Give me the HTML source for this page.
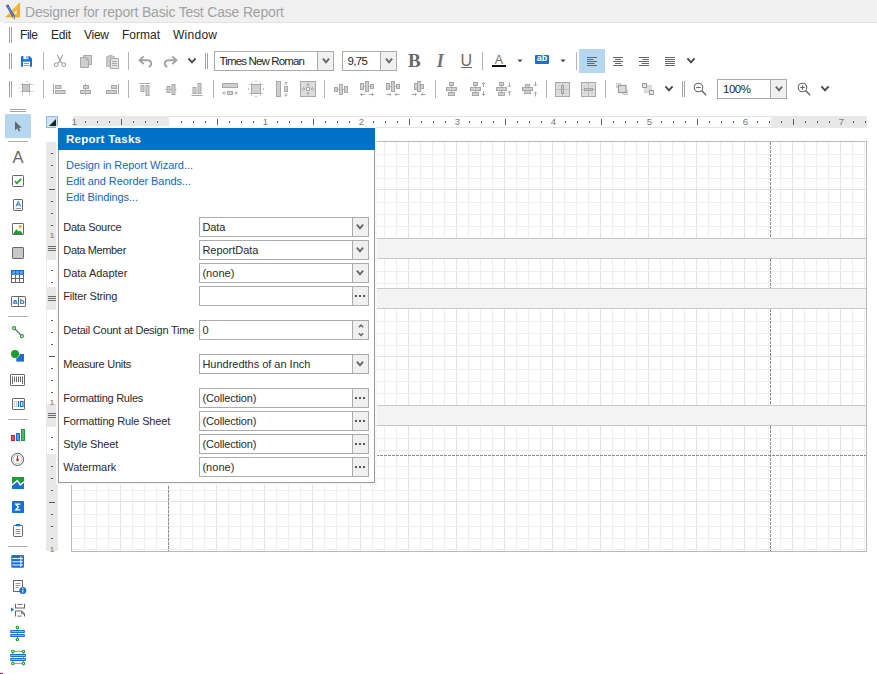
<!DOCTYPE html>
<html><head><meta charset="utf-8"><title>Designer for report Basic Test Case Report</title>
<style>
html,body{margin:0;padding:0;}
body{width:877px;height:674px;overflow:hidden;background:#fff;position:relative;font-family:"Liberation Sans",sans-serif;font-size:11px;color:#2b2b2b;}
.abs{position:absolute;}
.t{position:absolute;white-space:pre;line-height:14px;height:14px;}
.vsep{position:absolute;width:1px;background:#b4b4b4;}
.grip{position:absolute;width:3px;border-left:1px solid #a3a3a3;border-right:1px solid #a3a3a3;box-sizing:border-box;}
.hgrip{position:absolute;height:3px;border-top:1px solid #a3a3a3;border-bottom:1px solid #a3a3a3;box-sizing:border-box;}
.combo{position:absolute;box-sizing:border-box;border:1px solid #ababab;background:#fff;}
.combo .btn{position:absolute;top:-1px;right:-1px;bottom:-1px;width:17px;box-sizing:border-box;border:1px solid #ababab;background:#f0f0f0;}
.ic{position:absolute;overflow:visible;}
.inp{position:absolute;left:199px;width:170px;height:20px;box-sizing:border-box;border:1px solid #ababab;background:#fff;}
.inp .btn{position:absolute;top:-1px;right:-1px;bottom:-1px;width:17px;box-sizing:border-box;border:1px solid #ababab;background:#f0f0f0;}
.lnk{color:#1a66b8;}
</style></head>
<body>
<div class="abs" style="left:0;top:0;width:877px;height:22px;background:#f0f0f0;"></div>
<div class="abs" style="left:3px;top:22px;width:874px;height:1px;background:#e2e2e2;"></div>
<svg class="ic" style="left:5px;top:2px" width="16" height="18" viewBox="0 0 16 18"><path d="M14.6 0.9 V14.9 H0.9 Z M12.1 6.3 V12.3 H7.6 Z" fill="#f9c321" stroke="#e8a010" stroke-width="0.7" fill-rule="evenodd"/><path d="M13.5 3.5 V14" fill="none" stroke="#f08a10" stroke-width="0.8" stroke-dasharray="1 1"/><path d="M2.6 13.9 H13" fill="none" stroke="#f08a10" stroke-width="0.8" stroke-dasharray="1 1"/><g transform="translate(0.4,0.9)"><path d="M1.53 3.89 L3.27 2.91 L9.47 13.91 L7.73 14.89 Z" fill="#2f62d0" stroke="#1b44b0" stroke-width="0.5" /><path d="M2.6 3.8 L8.4 14.1" fill="none" stroke="#dfe9ff" stroke-width="0.7" stroke-dasharray="1.1 1.1"/><path d="M7.73 14.89 L9.47 13.91 L9.5 15.6 Z" fill="#ffe27a" stroke="none" stroke-width="1" /><path d="M8.7 15.3 L9.5 14.9 L9.8 16.8 Z" fill="#111" stroke="none" stroke-width="1" /><path d="M0.89 2.76 L2.63 1.78 L3.27 2.91 L1.53 3.89 Z" fill="#f4f4f4" stroke="#222" stroke-width="0.7" /></g></svg>
<div class="t " style="left:25px;top:5px;font-size:14px;color:#a2a2a2;letter-spacing:-0.186px;">Designer for report Basic Test Case Report</div>
<div class="grip" style="left:9px;top:27px;height:16px;"></div>
<div class="t " style="left:20px;top:28px;font-size:12px;color:#262626;letter-spacing:-0.448px;">File</div>
<div class="t " style="left:51px;top:28px;font-size:12px;color:#262626;letter-spacing:-0.229px;">Edit</div>
<div class="t " style="left:84px;top:28px;font-size:12px;color:#262626;letter-spacing:-0.266px;">View</div>
<div class="t " style="left:122px;top:28px;font-size:12px;color:#262626;letter-spacing:-0.003px;">Format</div>
<div class="t " style="left:173px;top:28px;font-size:12px;color:#262626;letter-spacing:0.263px;">Window</div>
<div class="grip" style="left:9px;top:53px;height:16px;"></div>
<svg class="ic" style="left:18px;top:53px" width="16" height="16" viewBox="0 0 16 16"><path d="M3 4.2 Q3 3 4.2 3 H11.4 L14 5.6 V12.8 Q14 14 12.8 14 H4.2 Q3 14 3 12.8 Z" fill="#1a6fd0" stroke="none" stroke-width="1" /><rect x="5.4" y="3" width="5" height="3.2" fill="#fff" stroke="none" stroke-width="1" /><rect x="8.4" y="3.5" width="1.2" height="2" fill="#1a6fd0" stroke="none" stroke-width="1" /><rect x="5" y="8.6" width="7" height="5.4" fill="#fff" stroke="none" stroke-width="1" /><rect x="6" y="10" width="5" height="0.9" fill="#8e8e8e" stroke="none" stroke-width="1" /><rect x="6" y="12" width="5" height="0.9" fill="#8e8e8e" stroke="none" stroke-width="1" /></svg>
<div class="vsep" style="left:43px;top:52px;height:18px;"></div>
<svg class="ic" style="left:52px;top:53px" width="16" height="16" viewBox="0 0 16 16"><line x1="5.3" y1="2" x2="9.6" y2="10.2" stroke="#9e9e9e" stroke-width="1.1" /><line x1="10.7" y1="2" x2="6.4" y2="10.2" stroke="#9e9e9e" stroke-width="1.1" /><circle cx="4.3" cy="11.6" r="1.9" fill="none" stroke="#9e9e9e" stroke-width="1.1"/><circle cx="11.7" cy="11.6" r="1.9" fill="none" stroke="#9e9e9e" stroke-width="1.1"/></svg>
<svg class="ic" style="left:78px;top:53px" width="16" height="16" viewBox="0 0 16 16"><path d="M5.5 2.5 H13.5 V11.5 H5.5 Z" fill="#cfcfcf" stroke="#a8a8a8" stroke-width="1" /><path d="M2.5 4.5 H8 L10.5 7 V14.5 H2.5 Z" fill="#cfcfcf" stroke="#a8a8a8" stroke-width="1" /><path d="M8 4.5 V7 H10.5" fill="none" stroke="#a8a8a8" stroke-width="1" /></svg>
<svg class="ic" style="left:104px;top:53px" width="16" height="16" viewBox="0 0 16 16"><path d="M2.5 3.5 H10.5 V13.5 H2.5 Z" fill="#c9c9c9" stroke="#bcbcbc" stroke-width="1" /><rect x="4.5" y="1.8" width="4" height="2.2" fill="#bcbcbc" stroke="none" stroke-width="1" /><path d="M6.5 5.5 H14.5 V15.5 H6.5 Z" fill="#e4e4e4" stroke="#a8a8a8" stroke-width="1" /><line x1="8" y1="8.5" x2="13" y2="8.5" stroke="#a8a8a8" stroke-width="1" /><line x1="8" y1="10.5" x2="13" y2="10.5" stroke="#a8a8a8" stroke-width="1" /><line x1="8" y1="12.5" x2="13" y2="12.5" stroke="#a8a8a8" stroke-width="1" /></svg>
<div class="vsep" style="left:128px;top:52px;height:18px;"></div>
<svg class="ic" style="left:137px;top:53px" width="16" height="16" viewBox="0 0 16 16"><path d="M2.6 7.2 H10.2 Q14.2 7.2 14.2 10.8 Q14.2 13.2 11.6 13.9" fill="none" stroke="#a2a2a2" stroke-width="1.9" /><path d="M6.6 3.4 L2.6 7.2 L6.6 11" fill="none" stroke="#a2a2a2" stroke-width="1.9" /></svg>
<svg class="ic" style="left:163px;top:53px" width="16" height="16" viewBox="0 0 16 16"><path d="M13.4 7.2 H5.8 Q1.8 7.2 1.8 10.8 Q1.8 13.2 4.4 13.9" fill="none" stroke="#a2a2a2" stroke-width="1.9" /><path d="M9.4 3.4 L13.4 7.2 L9.4 11" fill="none" stroke="#a2a2a2" stroke-width="1.9" /></svg>
<svg class="ic" style="left:184px;top:53px" width="16" height="16" viewBox="0 0 16 16"><path d="M4.4 5.3 L8 9.3 L11.6 5.3" fill="none" stroke="#4a4a4a" stroke-width="1.9" /></svg>
<div class="grip" style="left:205px;top:53px;height:16px;"></div>
<div class="combo" style="left:214px;top:51px;width:120px;height:20px;"><div class="btn"></div></div>
<svg class="ic" style="left:318px;top:53px" width="16" height="16" viewBox="0 0 16 16"><path d="M4.9 5.7 L8 9.4 L11.1 5.7" fill="none" stroke="#666" stroke-width="1.8" /></svg>
<div class="t " style="left:219.5px;top:54px;font-size:11.5px;color:#262626;letter-spacing:-0.847px;">Times New Roman</div>
<div class="combo" style="left:342px;top:51px;width:55px;height:20px;"><div class="btn"></div></div>
<svg class="ic" style="left:381px;top:53px" width="16" height="16" viewBox="0 0 16 16"><path d="M4.9 5.7 L8 9.4 L11.1 5.7" fill="none" stroke="#666" stroke-width="1.8" /></svg>
<div class="t " style="left:347.5px;top:54px;font-size:11.5px;color:#262626;letter-spacing:-0.630px;">9,75</div>
<div class="t" style="left:408px;top:51.8px;height:18px;line-height:18px;font-family:'Liberation Serif',serif;font-weight:bold;font-size:19px;color:#6a6a6a;">B</div>
<div class="t" style="left:436.8px;top:51.6px;height:18px;line-height:18px;font-family:'Liberation Serif',serif;font-style:italic;font-weight:bold;font-size:18px;color:#747474;">I</div>
<div class="t" style="left:460.5px;top:51.5px;height:18px;line-height:18px;font-family:'Liberation Sans',sans-serif;font-size:16px;color:#6a6a6a;">U</div>
<div class="abs" style="left:461px;top:67px;width:11px;height:1px;background:#6a6a6a;"></div>
<div class="vsep" style="left:482px;top:52px;height:18px;"></div>
<div class="t" style="left:492px;top:52.7px;height:14px;line-height:14px;font-size:12.5px;color:#707070;width:14px;text-align:center;">A</div>
<div class="abs" style="left:492px;top:65px;width:14px;height:2px;background:#111;"></div>
<svg class="ic" style="left:512px;top:53px" width="16" height="16" viewBox="0 0 16 16"><path d="M5.5 6.5 H10.5 L8 9.2 Z" fill="#444" stroke="none" stroke-width="1" /></svg>
<div class="abs" style="left:535px;top:55px;width:14px;height:9px;background:#1a6fd0;border-radius:1px;"></div>
<div class="t" style="left:535px;top:53.5px;width:14px;height:9px;line-height:9px;text-align:center;font-size:9px;font-weight:bold;color:#fff;">ab</div>
<svg class="ic" style="left:555px;top:53px" width="16" height="16" viewBox="0 0 16 16"><path d="M5.5 6.5 H10.5 L8 9.2 Z" fill="#444" stroke="none" stroke-width="1" /></svg>
<div class="vsep" style="left:576px;top:52px;height:18px;"></div>
<div class="abs" style="left:579px;top:49px;width:26px;height:24px;background:#b5d7f0;"></div>
<svg class="ic" style="left:584px;top:53px" width="16" height="16" viewBox="0 0 16 16"><line x1="3" y1="4.5" x2="13" y2="4.5" stroke="#666" stroke-width="1" /><line x1="3" y1="6.5" x2="9.5" y2="6.5" stroke="#666" stroke-width="1" /><line x1="3" y1="8.5" x2="13" y2="8.5" stroke="#666" stroke-width="1" /><line x1="3" y1="10.5" x2="10.5" y2="10.5" stroke="#666" stroke-width="1" /><line x1="3" y1="12.5" x2="13" y2="12.5" stroke="#666" stroke-width="1" /></svg>
<svg class="ic" style="left:610px;top:53px" width="16" height="16" viewBox="0 0 16 16"><line x1="3" y1="4.5" x2="13" y2="4.5" stroke="#666" stroke-width="1" /><line x1="5" y1="6.5" x2="11" y2="6.5" stroke="#666" stroke-width="1" /><line x1="3" y1="8.5" x2="13" y2="8.5" stroke="#666" stroke-width="1" /><line x1="5" y1="10.5" x2="11" y2="10.5" stroke="#666" stroke-width="1" /><line x1="3" y1="12.5" x2="13" y2="12.5" stroke="#666" stroke-width="1" /></svg>
<svg class="ic" style="left:636px;top:53px" width="16" height="16" viewBox="0 0 16 16"><line x1="3" y1="4.5" x2="13" y2="4.5" stroke="#666" stroke-width="1" /><line x1="6.5" y1="6.5" x2="13" y2="6.5" stroke="#666" stroke-width="1" /><line x1="3" y1="8.5" x2="13" y2="8.5" stroke="#666" stroke-width="1" /><line x1="5.5" y1="10.5" x2="13" y2="10.5" stroke="#666" stroke-width="1" /><line x1="3" y1="12.5" x2="13" y2="12.5" stroke="#666" stroke-width="1" /></svg>
<svg class="ic" style="left:662px;top:53px" width="16" height="16" viewBox="0 0 16 16"><line x1="3" y1="4.5" x2="13" y2="4.5" stroke="#666" stroke-width="1" /><line x1="3" y1="6.5" x2="13" y2="6.5" stroke="#666" stroke-width="1" /><line x1="3" y1="8.5" x2="13" y2="8.5" stroke="#666" stroke-width="1" /><line x1="3" y1="10.5" x2="13" y2="10.5" stroke="#666" stroke-width="1" /><line x1="3" y1="12.5" x2="13" y2="12.5" stroke="#666" stroke-width="1" /></svg>
<svg class="ic" style="left:683px;top:53px" width="16" height="16" viewBox="0 0 16 16"><path d="M4.4 5.3 L8 9.3 L11.6 5.3" fill="none" stroke="#4a4a4a" stroke-width="1.9" /></svg>
<div class="grip" style="left:9px;top:81px;height:16px;"></div>
<div class="vsep" style="left:43px;top:80px;height:18px;"></div>
<div class="vsep" style="left:128px;top:80px;height:18px;"></div>
<div class="vsep" style="left:213px;top:80px;height:18px;"></div>
<div class="vsep" style="left:324px;top:80px;height:18px;"></div>
<div class="vsep" style="left:435px;top:80px;height:18px;"></div>
<div class="vsep" style="left:546px;top:80px;height:18px;"></div>
<div class="vsep" style="left:605px;top:80px;height:18px;"></div>
<svg class="ic" style="left:18px;top:81px" width="16" height="16" viewBox="0 0 16 16"><line x1="4.5" y1="1.5" x2="4.5" y2="14.5" stroke="#d0d0d0" stroke-width="1" /><line x1="11.5" y1="1.5" x2="11.5" y2="14.5" stroke="#d0d0d0" stroke-width="1" /><line x1="2" y1="3.5" x2="15.5" y2="3.5" stroke="#d0d0d0" stroke-width="1" /><line x1="2" y1="10.5" x2="15.5" y2="10.5" stroke="#d0d0d0" stroke-width="1" /><rect x="4.5" y="3.5" width="7" height="7" fill="#c6c6c6" stroke="#a6a6a6" stroke-width="1" /><path d="M7.8 0.2 H10.2 L9 1.2 Z" fill="#a8a8a8" stroke="none" stroke-width="1" /><path d="M0.8 5.8 V8.2 L1.8 7 Z" fill="#a8a8a8" stroke="none" stroke-width="1" /></svg>
<svg class="ic" style="left:51px;top:81px" width="16" height="16" viewBox="0 0 16 16"><line x1="2.5" y1="3" x2="2.5" y2="13.5" stroke="#a8a8a8" stroke-width="1" /><rect x="4.5" y="4.5" width="5.5" height="3" fill="#cfcfcf" stroke="#a8a8a8" stroke-width="1" /><rect x="4.5" y="9.5" width="9.5" height="3" fill="#cfcfcf" stroke="#a8a8a8" stroke-width="1" /></svg>
<svg class="ic" style="left:77px;top:81px" width="16" height="16" viewBox="0 0 16 16"><line x1="8.5" y1="2.5" x2="8.5" y2="14" stroke="#a8a8a8" stroke-width="1" /><rect x="6.5" y="4.5" width="5" height="3" fill="#cfcfcf" stroke="#a8a8a8" stroke-width="1" /><rect x="3.5" y="9.5" width="10" height="3" fill="#cfcfcf" stroke="#a8a8a8" stroke-width="1" /></svg>
<svg class="ic" style="left:104px;top:81px" width="16" height="16" viewBox="0 0 16 16"><line x1="14.5" y1="3" x2="14.5" y2="13.5" stroke="#a8a8a8" stroke-width="1" /><rect x="7.5" y="4.5" width="5" height="3" fill="#cfcfcf" stroke="#a8a8a8" stroke-width="1" /><rect x="2.5" y="9.5" width="10" height="3" fill="#cfcfcf" stroke="#a8a8a8" stroke-width="1" /></svg>
<svg class="ic" style="left:137px;top:81px" width="16" height="16" viewBox="0 0 16 16"><line x1="2.5" y1="2.5" x2="13.5" y2="2.5" stroke="#a8a8a8" stroke-width="1" /><rect x="4" y="4.5" width="3" height="6" fill="#cfcfcf" stroke="#a8a8a8" stroke-width="1" /><rect x="9" y="4.5" width="3" height="10" fill="#cfcfcf" stroke="#a8a8a8" stroke-width="1" /></svg>
<svg class="ic" style="left:163px;top:81px" width="16" height="16" viewBox="0 0 16 16"><line x1="2.5" y1="8.5" x2="13.5" y2="8.5" stroke="#a8a8a8" stroke-width="1" /><rect x="4" y="5.5" width="3" height="6" fill="#cfcfcf" stroke="#a8a8a8" stroke-width="1" /><rect x="9" y="3.5" width="3" height="10" fill="#cfcfcf" stroke="#a8a8a8" stroke-width="1" /></svg>
<svg class="ic" style="left:189px;top:81px" width="16" height="16" viewBox="0 0 16 16"><line x1="2.5" y1="14.5" x2="13.5" y2="14.5" stroke="#a8a8a8" stroke-width="1" /><rect x="4" y="6.5" width="3" height="6" fill="#cfcfcf" stroke="#a8a8a8" stroke-width="1" /><rect x="9" y="2.5" width="3" height="10" fill="#cfcfcf" stroke="#a8a8a8" stroke-width="1" /></svg>
<svg class="ic" style="left:222px;top:81px" width="16" height="16" viewBox="0 0 16 16"><rect x="0.5" y="2.5" width="15" height="4" fill="#cfcfcf" stroke="#a8a8a8" stroke-width="1" /><rect x="5.5" y="10.5" width="5" height="3" fill="#cfcfcf" stroke="#a8a8a8" stroke-width="1" /><line x1="4" y1="12" x2="0.8" y2="12" stroke="#a8a8a8" stroke-width="1" /><path d="M2.4000000000000004 10.4 L0.8 12 L2.4000000000000004 13.6" fill="none" stroke="#a8a8a8" stroke-width="1" /><line x1="12" y1="12" x2="15.2" y2="12" stroke="#a8a8a8" stroke-width="1" /><path d="M13.6 10.4 L15.2 12 L13.6 13.6" fill="none" stroke="#a8a8a8" stroke-width="1" /></svg>
<svg class="ic" style="left:248px;top:81px" width="16" height="16" viewBox="0 0 16 16"><line x1="3.5" y1="1" x2="3.5" y2="15" stroke="#c6c6c6" stroke-width="1" /><line x1="12.5" y1="1" x2="12.5" y2="15" stroke="#c6c6c6" stroke-width="1" /><line x1="1" y1="3.5" x2="15" y2="3.5" stroke="#c6c6c6" stroke-width="1" /><line x1="1" y1="12.5" x2="15" y2="12.5" stroke="#c6c6c6" stroke-width="1" /><rect x="3.5" y="3.5" width="9" height="9" fill="#cfcfcf" stroke="#a8a8a8" stroke-width="1" /><path d="M6.8 0 H9.2 L8 1.2 Z" fill="#a8a8a8" stroke="none" stroke-width="1" /><path d="M6.8 16 H9.2 L8 14.8 Z" fill="#a8a8a8" stroke="none" stroke-width="1" /><path d="M0 6.8 V9.2 L1.2 8 Z" fill="#a8a8a8" stroke="none" stroke-width="1" /><path d="M16 6.8 V9.2 L14.8 8 Z" fill="#a8a8a8" stroke="none" stroke-width="1" /></svg>
<svg class="ic" style="left:274px;top:81px" width="16" height="16" viewBox="0 0 16 16"><rect x="2.5" y="0.5" width="4" height="15" fill="#cfcfcf" stroke="#a8a8a8" stroke-width="1" /><rect x="10.5" y="5.5" width="3" height="5" fill="#cfcfcf" stroke="#a8a8a8" stroke-width="1" /><line x1="12" y1="4" x2="12" y2="0.8" stroke="#a8a8a8" stroke-width="1" /><path d="M10.4 2.4000000000000004 L12 0.8 L13.6 2.4000000000000004" fill="none" stroke="#a8a8a8" stroke-width="1" /><line x1="12" y1="12" x2="12" y2="15.2" stroke="#a8a8a8" stroke-width="1" /><path d="M10.4 13.6 L12 15.2 L13.6 13.6" fill="none" stroke="#a8a8a8" stroke-width="1" /></svg>
<svg class="ic" style="left:300px;top:81px" width="16" height="16" viewBox="0 0 16 16"><rect x="0.5" y="0.5" width="15" height="15" fill="#dcdcdc" stroke="#a8a8a8" stroke-width="1" /><rect x="6.5" y="6.5" width="3" height="3" fill="#f4f4f4" stroke="#a8a8a8" stroke-width="1" /><line x1="8" y1="1.5" x2="8" y2="5" stroke="#a8a8a8" stroke-width="1" /><path d="M6.4 3.4 L8 5 L9.6 3.4" fill="none" stroke="#a8a8a8" stroke-width="1" /><line x1="8" y1="14.5" x2="8" y2="11" stroke="#a8a8a8" stroke-width="1" /><path d="M6.4 12.6 L8 11 L9.6 12.6" fill="none" stroke="#a8a8a8" stroke-width="1" /><line x1="1.5" y1="8" x2="5" y2="8" stroke="#a8a8a8" stroke-width="1" /><path d="M3.4 6.4 L5 8 L3.4 9.6" fill="none" stroke="#a8a8a8" stroke-width="1" /><line x1="14.5" y1="8" x2="11" y2="8" stroke="#a8a8a8" stroke-width="1" /><path d="M12.6 6.4 L11 8 L12.6 9.6" fill="none" stroke="#a8a8a8" stroke-width="1" /></svg>
<svg class="ic" style="left:333px;top:81px" width="16" height="16" viewBox="0 0 16 16"><line x1="1" y1="8.5" x2="15" y2="8.5" stroke="#a8a8a8" stroke-width="1" /><rect x="1.5" y="6.5" width="3" height="4" fill="#cfcfcf" stroke="#a8a8a8" stroke-width="1" /><rect x="6.5" y="3.5" width="3" height="10" fill="#cfcfcf" stroke="#a8a8a8" stroke-width="1" /><rect x="11.5" y="5.5" width="3" height="6" fill="#cfcfcf" stroke="#a8a8a8" stroke-width="1" /></svg>
<svg class="ic" style="left:359px;top:81px" width="16" height="16" viewBox="0 0 16 16"><line x1="4.5" y1="5.5" x2="11.5" y2="5.5" stroke="#a8a8a8" stroke-width="1" /><rect x="1.5" y="2.5" width="3" height="6" fill="#cfcfcf" stroke="#a8a8a8" stroke-width="1" /><rect x="6.5" y="0.5" width="3" height="10" fill="#cfcfcf" stroke="#a8a8a8" stroke-width="1" /><rect x="11.5" y="3.5" width="3" height="4" fill="#cfcfcf" stroke="#a8a8a8" stroke-width="1" /><line x1="6" y1="13.5" x2="1.5" y2="13.5" stroke="#a8a8a8" stroke-width="1" /><path d="M3.1 11.9 L1.5 13.5 L3.1 15.1" fill="none" stroke="#a8a8a8" stroke-width="1" /><line x1="10" y1="13.5" x2="14.5" y2="13.5" stroke="#a8a8a8" stroke-width="1" /><path d="M12.9 11.9 L14.5 13.5 L12.9 15.1" fill="none" stroke="#a8a8a8" stroke-width="1" /></svg>
<svg class="ic" style="left:385px;top:81px" width="16" height="16" viewBox="0 0 16 16"><line x1="4.5" y1="5.5" x2="11.5" y2="5.5" stroke="#a8a8a8" stroke-width="1" /><rect x="1.5" y="2.5" width="3" height="6" fill="#cfcfcf" stroke="#a8a8a8" stroke-width="1" /><rect x="6.5" y="0.5" width="3" height="10" fill="#cfcfcf" stroke="#a8a8a8" stroke-width="1" /><rect x="11.5" y="3.5" width="3" height="4" fill="#cfcfcf" stroke="#a8a8a8" stroke-width="1" /><line x1="1.5" y1="13.5" x2="6" y2="13.5" stroke="#a8a8a8" stroke-width="1" /><path d="M4.4 11.9 L6 13.5 L4.4 15.1" fill="none" stroke="#a8a8a8" stroke-width="1" /><line x1="14.5" y1="13.5" x2="10" y2="13.5" stroke="#a8a8a8" stroke-width="1" /><path d="M11.6 11.9 L10 13.5 L11.6 15.1" fill="none" stroke="#a8a8a8" stroke-width="1" /></svg>
<svg class="ic" style="left:411px;top:81px" width="16" height="16" viewBox="0 0 16 16"><rect x="3.5" y="2.5" width="3" height="6" fill="#cfcfcf" stroke="#a8a8a8" stroke-width="1" /><rect x="9.5" y="3.5" width="3" height="4" fill="#cfcfcf" stroke="#a8a8a8" stroke-width="1" /><rect x="6.5" y="0.5" width="3" height="10" fill="#cfcfcf" stroke="#a8a8a8" stroke-width="1" /><line x1="0.8" y1="13.5" x2="5.3" y2="13.5" stroke="#a8a8a8" stroke-width="1" /><path d="M3.6999999999999997 11.9 L5.3 13.5 L3.6999999999999997 15.1" fill="none" stroke="#a8a8a8" stroke-width="1" /><line x1="14.7" y1="13.5" x2="10.2" y2="13.5" stroke="#a8a8a8" stroke-width="1" /><path d="M11.799999999999999 11.9 L10.2 13.5 L11.799999999999999 15.1" fill="none" stroke="#a8a8a8" stroke-width="1" /></svg>
<svg class="ic" style="left:443px;top:81px" width="16" height="16" viewBox="0 0 16 16"><line x1="8.5" y1="2" x2="8.5" y2="14" stroke="#a8a8a8" stroke-width="1" /><rect x="6.5" y="1.5" width="4" height="3" fill="#cfcfcf" stroke="#a8a8a8" stroke-width="1" /><rect x="3.5" y="6.5" width="10" height="3" fill="#cfcfcf" stroke="#a8a8a8" stroke-width="1" /><rect x="5.5" y="11.5" width="6" height="3" fill="#cfcfcf" stroke="#a8a8a8" stroke-width="1" /></svg>
<svg class="ic" style="left:469px;top:81px" width="16" height="16" viewBox="0 0 16 16"><line x1="6.5" y1="2" x2="6.5" y2="14" stroke="#a8a8a8" stroke-width="1" /><rect x="4.5" y="1.5" width="4" height="3" fill="#cfcfcf" stroke="#a8a8a8" stroke-width="1" /><rect x="1.5" y="6.5" width="10" height="3" fill="#cfcfcf" stroke="#a8a8a8" stroke-width="1" /><rect x="3.5" y="11.5" width="6" height="3" fill="#cfcfcf" stroke="#a8a8a8" stroke-width="1" /><line x1="14.5" y1="6" x2="14.5" y2="1.5" stroke="#a8a8a8" stroke-width="1" /><path d="M12.9 3.1 L14.5 1.5 L16.1 3.1" fill="none" stroke="#a8a8a8" stroke-width="1" /><line x1="14.5" y1="10" x2="14.5" y2="14.5" stroke="#a8a8a8" stroke-width="1" /><path d="M12.9 12.9 L14.5 14.5 L16.1 12.9" fill="none" stroke="#a8a8a8" stroke-width="1" /></svg>
<svg class="ic" style="left:495px;top:81px" width="16" height="16" viewBox="0 0 16 16"><line x1="6.5" y1="2" x2="6.5" y2="14" stroke="#a8a8a8" stroke-width="1" /><rect x="4.5" y="1.5" width="4" height="3" fill="#cfcfcf" stroke="#a8a8a8" stroke-width="1" /><rect x="1.5" y="6.5" width="10" height="3" fill="#cfcfcf" stroke="#a8a8a8" stroke-width="1" /><rect x="3.5" y="11.5" width="6" height="3" fill="#cfcfcf" stroke="#a8a8a8" stroke-width="1" /><line x1="14.5" y1="1.5" x2="14.5" y2="6" stroke="#a8a8a8" stroke-width="1" /><path d="M12.9 4.4 L14.5 6 L16.1 4.4" fill="none" stroke="#a8a8a8" stroke-width="1" /><line x1="14.5" y1="14.5" x2="14.5" y2="10" stroke="#a8a8a8" stroke-width="1" /><path d="M12.9 11.6 L14.5 10 L16.1 11.6" fill="none" stroke="#a8a8a8" stroke-width="1" /></svg>
<svg class="ic" style="left:521px;top:81px" width="16" height="16" viewBox="0 0 16 16"><rect x="4.5" y="3.5" width="4" height="3" fill="#cfcfcf" stroke="#a8a8a8" stroke-width="1" /><rect x="3.5" y="9.5" width="6" height="3" fill="#cfcfcf" stroke="#a8a8a8" stroke-width="1" /><rect x="1.5" y="6.5" width="10" height="3" fill="#cfcfcf" stroke="#a8a8a8" stroke-width="1" /><line x1="14.5" y1="0.5" x2="14.5" y2="5" stroke="#a8a8a8" stroke-width="1" /><path d="M12.9 3.4 L14.5 5 L16.1 3.4" fill="none" stroke="#a8a8a8" stroke-width="1" /><line x1="14.5" y1="15.5" x2="14.5" y2="11" stroke="#a8a8a8" stroke-width="1" /><path d="M12.9 12.6 L14.5 11 L16.1 12.6" fill="none" stroke="#a8a8a8" stroke-width="1" /></svg>
<svg class="ic" style="left:555px;top:81px" width="16" height="16" viewBox="0 0 16 16"><rect x="0.5" y="1.5" width="14" height="14" fill="#dedede" stroke="#a8a8a8" stroke-width="1" /><line x1="7.5" y1="1.5" x2="7.5" y2="15.5" stroke="#bcbcbc" stroke-width="1" /><line x1="0.5" y1="8.5" x2="14.5" y2="8.5" stroke="#bcbcbc" stroke-width="1" /><rect x="3.5" y="4.5" width="1" height="1" fill="#b4b4b4" stroke="none" stroke-width="1" /><rect x="10.5" y="4.5" width="1" height="1" fill="#b4b4b4" stroke="none" stroke-width="1" /><rect x="3.5" y="11.5" width="1" height="1" fill="#b4b4b4" stroke="none" stroke-width="1" /><rect x="10.5" y="11.5" width="1" height="1" fill="#b4b4b4" stroke="none" stroke-width="1" /><rect x="6.5" y="4.5" width="2" height="8" fill="#c8c8c8" stroke="#a2a2a2" stroke-width="1" /></svg>
<svg class="ic" style="left:581px;top:81px" width="16" height="16" viewBox="0 0 16 16"><rect x="0.5" y="1.5" width="14" height="14" fill="#dedede" stroke="#a8a8a8" stroke-width="1" /><line x1="7.5" y1="1.5" x2="7.5" y2="15.5" stroke="#bcbcbc" stroke-width="1" /><line x1="0.5" y1="8.5" x2="14.5" y2="8.5" stroke="#bcbcbc" stroke-width="1" /><rect x="3.5" y="4.5" width="1" height="1" fill="#b4b4b4" stroke="none" stroke-width="1" /><rect x="10.5" y="4.5" width="1" height="1" fill="#b4b4b4" stroke="none" stroke-width="1" /><rect x="3.5" y="11.5" width="1" height="1" fill="#b4b4b4" stroke="none" stroke-width="1" /><rect x="10.5" y="11.5" width="1" height="1" fill="#b4b4b4" stroke="none" stroke-width="1" /><rect x="3.5" y="7.5" width="8" height="2" fill="#c8c8c8" stroke="#a2a2a2" stroke-width="1" /></svg>
<svg class="ic" style="left:614px;top:81px" width="16" height="16" viewBox="0 0 16 16"><rect x="2.5" y="2.5" width="4" height="4" fill="#e6e6e6" stroke="#cfcfcf" stroke-width="1" /><rect x="9" y="9.5" width="4.5" height="4" fill="#e6e6e6" stroke="#cfcfcf" stroke-width="1" /><rect x="4.5" y="4.5" width="7.5" height="7" fill="#dcdcdc" stroke="#9a9a9a" stroke-width="1.2" /></svg>
<svg class="ic" style="left:640px;top:81px" width="16" height="16" viewBox="0 0 16 16"><rect x="4.5" y="4.5" width="7" height="7" fill="#dedede" stroke="#d4d4d4" stroke-width="1" /><rect x="2.5" y="2.5" width="4" height="4" fill="#e4e4e4" stroke="#9a9a9a" stroke-width="1" /><rect x="9.5" y="9.5" width="4" height="4" fill="#e4e4e4" stroke="#9a9a9a" stroke-width="1" /></svg>
<svg class="ic" style="left:661px;top:81px" width="16" height="16" viewBox="0 0 16 16"><path d="M4.4 5.3 L8 9.3 L11.6 5.3" fill="none" stroke="#4a4a4a" stroke-width="1.9" /></svg>
<div class="grip" style="left:682px;top:81px;height:16px;"></div>
<svg class="ic" style="left:692px;top:81px" width="16" height="16" viewBox="0 0 16 16"><circle cx="6.5" cy="6.5" r="4.3" fill="none" stroke="#666" stroke-width="1.1"/><line x1="9.8" y1="9.8" x2="14.2" y2="14.2" stroke="#666" stroke-width="1.5" /><line x1="4.2" y1="6.5" x2="8.8" y2="6.5" stroke="#666" stroke-width="1.1" /></svg>
<div class="combo" style="left:717px;top:79px;width:70px;height:20px;"><div class="btn"></div></div>
<svg class="ic" style="left:771px;top:81px" width="16" height="16" viewBox="0 0 16 16"><path d="M4.9 5.7 L8 9.4 L11.1 5.7" fill="none" stroke="#666" stroke-width="1.8" /></svg>
<div class="t " style="left:723px;top:82px;font-size:11.5px;color:#262626;letter-spacing:-0.474px;">100%</div>
<svg class="ic" style="left:796px;top:81px" width="16" height="16" viewBox="0 0 16 16"><circle cx="6.5" cy="6.5" r="4.3" fill="none" stroke="#666" stroke-width="1.1"/><line x1="9.8" y1="9.8" x2="14.2" y2="14.2" stroke="#666" stroke-width="1.5" /><line x1="4.2" y1="6.5" x2="8.8" y2="6.5" stroke="#666" stroke-width="1.1" /><line x1="6.5" y1="4.2" x2="6.5" y2="8.8" stroke="#666" stroke-width="1.1" /></svg>
<svg class="ic" style="left:817px;top:81px" width="16" height="16" viewBox="0 0 16 16"><path d="M4.4 5.3 L8 9.3 L11.6 5.3" fill="none" stroke="#4a4a4a" stroke-width="1.9" /></svg>
<div class="hgrip" style="left:10px;top:109px;width:16px;"></div>
<div class="abs" style="left:5px;top:114px;width:26px;height:24px;background:#b5d7f0;"></div>
<svg class="ic" style="left:10px;top:118px" width="16" height="16" viewBox="0 0 16 16"><path d="M5 3.2 V12.4 L7.3 10.3 L8.9 13.6 L10.3 13 L8.8 9.8 H11.7 Z" fill="#666" stroke="none" stroke-width="1" /></svg>
<div class="abs" style="left:8px;top:141px;width:20px;height:1px;background:#b0b0b0;"></div>
<div class="abs" style="left:8px;top:316px;width:20px;height:1px;background:#b0b0b0;"></div>
<div class="abs" style="left:8px;top:419px;width:20px;height:1px;background:#b0b0b0;"></div>
<div class="abs" style="left:8px;top:546px;width:20px;height:1px;background:#b0b0b0;"></div>
<div class="t" style="left:10px;top:148px;width:16px;height:18px;line-height:18px;text-align:center;font-size:16.5px;color:#666;">A</div>
<svg class="ic" style="left:10px;top:173px" width="16" height="16" viewBox="0 0 16 16"><rect x="2.5" y="2.5" width="11" height="11" fill="#fff" stroke="#676767" stroke-width="1" rx="0.8"/><path d="M4.9 8.1 L7 10.2 L11.2 5.9" fill="none" stroke="#22a32e" stroke-width="1.7" /></svg>
<svg class="ic" style="left:10px;top:197px" width="16" height="16" viewBox="0 0 16 16"><rect x="3.5" y="2.5" width="9" height="11" fill="#fff" stroke="#676767" stroke-width="1" rx="0.6"/><path d="M5.9 9.5 L8.3 4.4 L10.7 9.5 M6.9 7.8 H9.7" fill="none" stroke="#1a6fd0" stroke-width="1" /><line x1="5.5" y1="11.5" x2="11" y2="11.5" stroke="#8c8c8c" stroke-width="0.9" /></svg>
<svg class="ic" style="left:10px;top:221px" width="16" height="16" viewBox="0 0 16 16"><rect x="2.5" y="2.5" width="11" height="11" fill="#fff" stroke="#676767" stroke-width="1" rx="0.6"/><path d="M3 13 L6.3 8.2 L8.6 10.6 L10.2 9.4 L13 13 Z" fill="#1f9a2c" stroke="none" stroke-width="1" /><circle cx="10.3" cy="5.6" r="1.5" fill="#f6a623" stroke="none" stroke-width="1"/></svg>
<svg class="ic" style="left:10px;top:245px" width="16" height="16" viewBox="0 0 16 16"><rect x="2.5" y="2.5" width="11" height="11" fill="#c8c8c8" stroke="#676767" stroke-width="1" rx="0.6"/></svg>
<svg class="ic" style="left:10px;top:268px" width="16" height="16" viewBox="0 0 16 16"><rect x="1.5" y="2.5" width="12" height="12" fill="#fff" stroke="#676767" stroke-width="1" /><rect x="1" y="2" width="13" height="4.8" fill="#1a6fd0" stroke="none" stroke-width="1" /><rect x="2.6" y="3.2" width="2.3" height="2.4" fill="#7fb1ea" stroke="none" stroke-width="1" /><rect x="6.4" y="3.2" width="2.3" height="2.4" fill="#7fb1ea" stroke="none" stroke-width="1" /><rect x="10.2" y="3.2" width="2.3" height="2.4" fill="#7fb1ea" stroke="none" stroke-width="1" /><line x1="5.5" y1="6.8" x2="5.5" y2="14.5" stroke="#676767" stroke-width="1" /><line x1="9.5" y1="6.8" x2="9.5" y2="14.5" stroke="#676767" stroke-width="1" /><line x1="1.5" y1="10.5" x2="13.5" y2="10.5" stroke="#676767" stroke-width="1" /></svg>
<svg class="ic" style="left:10px;top:293px" width="16" height="16" viewBox="0 0 16 16"><rect x="1.5" y="3.5" width="14" height="10" fill="#fff" stroke="#676767" stroke-width="1" rx="0.6"/><line x1="8.5" y1="3.5" x2="8.5" y2="13.5" stroke="#676767" stroke-width="1" /><text x="5" y="11.2" font-family="Liberation Sans, sans-serif" font-size="8" font-weight="bold" fill="#1a6fd0" text-anchor="middle">a</text><text x="12" y="11.2" font-family="Liberation Sans, sans-serif" font-size="8" font-weight="bold" fill="#1a6fd0" text-anchor="middle">b</text></svg>
<svg class="ic" style="left:10px;top:323px" width="16" height="16" viewBox="0 0 16 16"><line x1="5" y1="6" x2="11" y2="12.2" stroke="#666" stroke-width="1.2" /><circle cx="4.1" cy="5.1" r="1.5" fill="#fff" stroke="#1f9a2c" stroke-width="1.2"/><circle cx="11.9" cy="13.1" r="1.5" fill="#fff" stroke="#1f9a2c" stroke-width="1.2"/></svg>
<svg class="ic" style="left:10px;top:347px" width="16" height="16" viewBox="0 0 16 16"><rect x="6.3" y="7" width="7.7" height="7.6" fill="#1a6fd0" stroke="none" stroke-width="1" /><circle cx="5.2" cy="6.8" r="4.6" fill="#fff" stroke="none" stroke-width="1"/><circle cx="5" cy="7" r="4" fill="#1f9a2c" stroke="none" stroke-width="1"/></svg>
<svg class="ic" style="left:9px;top:372px" width="16" height="16" viewBox="0 0 16 16"><rect x="1.5" y="2.5" width="14" height="11" fill="#fff" stroke="#676767" stroke-width="1" rx="0.6"/><line x1="3.5" y1="4.5" x2="3.5" y2="12" stroke="#676767" stroke-width="1" /><line x1="13.5" y1="4.5" x2="13.5" y2="12" stroke="#676767" stroke-width="1" /><line x1="5.5" y1="4.5" x2="5.5" y2="10" stroke="#676767" stroke-width="1" /><line x1="7.5" y1="4.5" x2="7.5" y2="10" stroke="#676767" stroke-width="1" /><line x1="9.5" y1="4.5" x2="9.5" y2="10" stroke="#676767" stroke-width="1" /><line x1="11.5" y1="4.5" x2="11.5" y2="10" stroke="#676767" stroke-width="1" /></svg>
<svg class="ic" style="left:10px;top:396px" width="16" height="16" viewBox="0 0 16 16"><rect x="2.5" y="2.5" width="12" height="11" fill="#fff" stroke="#676767" stroke-width="1" rx="0.6"/><rect x="4.5" y="5.5" width="2" height="5" fill="none" stroke="#cfcfcf" stroke-width="1" /><line x1="8.5" y1="5" x2="8.5" y2="11" stroke="#1a6fd0" stroke-width="1.1" /><rect x="10.5" y="5.5" width="2.5" height="5" fill="none" stroke="#1a6fd0" stroke-width="1.2" /></svg>
<svg class="ic" style="left:10px;top:427px" width="16" height="16" viewBox="0 0 16 16"><rect x="1.5" y="8.5" width="3" height="5" fill="#e8505b" stroke="#c8202c" stroke-width="1" /><rect x="6.5" y="6.5" width="3" height="7" fill="#5a9be6" stroke="#1a6fd0" stroke-width="1" /><rect x="11.5" y="2.5" width="3" height="11" fill="#55b85f" stroke="#1f9a2c" stroke-width="1" /></svg>
<svg class="ic" style="left:9px;top:451px" width="16" height="16" viewBox="0 0 16 16"><circle cx="8.5" cy="8.4" r="6.1" fill="#fff" stroke="#5c5c5c" stroke-width="1"/><circle cx="8.5" cy="8.4" r="4.5" fill="none" stroke="#a8a8a8" stroke-width="0.7"/><line x1="8.5" y1="8.8" x2="8.5" y2="4.6" stroke="#d3202c" stroke-width="1.1" /><circle cx="8.5" cy="8.9" r="1.3" fill="#d3202c" stroke="none" stroke-width="1"/></svg>
<svg class="ic" style="left:10px;top:475px" width="16" height="16" viewBox="0 0 16 16"><rect x="2" y="2" width="12" height="12" fill="#1a6fd0" stroke="none" stroke-width="1" rx="0.6"/><path d="M2.6 2 H13.4 Q14 2 14 2.6 V6.8 L10.3 10 L7.3 5.6 L2 10 V2.6 Q2 2 2.6 2 Z" fill="#1b9b30" stroke="none" stroke-width="1" /><path d="M2 10 L7.3 5.6 L10.3 10 L14 6.8" fill="none" stroke="#fff" stroke-width="1.5" /></svg>
<svg class="ic" style="left:10px;top:499px" width="16" height="16" viewBox="0 0 16 16"><rect x="2" y="2" width="12" height="12" fill="#1a6fd0" stroke="none" stroke-width="1" rx="0.8"/><path d="M10.4 5.2 H5.8 L8.4 8 L5.8 10.8 H10.4" fill="none" stroke="#fff" stroke-width="1.3" /></svg>
<svg class="ic" style="left:10px;top:522px" width="16" height="16" viewBox="0 0 16 16"><rect x="3.5" y="3.5" width="9" height="11" fill="#fff" stroke="#676767" stroke-width="1" rx="0.8"/><rect x="5.5" y="1.9" width="5" height="2.3" fill="#1a6fd0" stroke="none" stroke-width="1" rx="1"/><line x1="5.5" y1="7.5" x2="10.5" y2="7.5" stroke="#8a8a8a" stroke-width="1" /><line x1="5.5" y1="9.5" x2="10.5" y2="9.5" stroke="#8a8a8a" stroke-width="1" /><line x1="5.5" y1="11.5" x2="10.5" y2="11.5" stroke="#8a8a8a" stroke-width="1" /></svg>
<svg class="ic" style="left:9px;top:553px" width="16" height="16" viewBox="0 0 16 16"><rect x="2.3" y="2.1" width="12.7" height="12.7" fill="#1a6fd0" stroke="none" stroke-width="1" rx="1"/><rect x="3.3" y="5.1" width="10.7" height="0.95" fill="#fff" stroke="none" stroke-width="1" /><rect x="3.3" y="8.3" width="10.7" height="0.95" fill="#fff" stroke="none" stroke-width="1" /><rect x="3.3" y="11.5" width="10.7" height="0.95" fill="#fff" stroke="none" stroke-width="1" /><rect x="11.4" y="3.1" width="0.95" height="10.7" fill="#fff" stroke="none" stroke-width="1" /></svg>
<svg class="ic" style="left:10px;top:578px" width="16" height="16" viewBox="0 0 16 16"><rect x="3.5" y="2.5" width="9" height="11" fill="#fff" stroke="#676767" stroke-width="1" /><line x1="5.5" y1="5.5" x2="10.5" y2="5.5" stroke="#9a9a9a" stroke-width="1" /><line x1="5.5" y1="7.5" x2="10.5" y2="7.5" stroke="#9a9a9a" stroke-width="1" /><line x1="5.5" y1="9.5" x2="8.5" y2="9.5" stroke="#9a9a9a" stroke-width="1" /><circle cx="12.8" cy="12.5" r="3.5" fill="#1a6fd0" stroke="none" stroke-width="1"/><rect x="12.25" y="11.7" width="1.1" height="2.9" fill="#fff" stroke="none" stroke-width="1" /><rect x="12.25" y="9.9" width="1.1" height="1.1" fill="#fff" stroke="none" stroke-width="1" /></svg>
<svg class="ic" style="left:10px;top:602px" width="16" height="16" viewBox="0 0 16 16"><path d="M1 5.4 V9.8 L4.2 7.6 Z" fill="#1a6fd0" stroke="none" stroke-width="1" /><path d="M5.5 1.8 V6 H14.5 V1.8" fill="none" stroke="#676767" stroke-width="1.1" /><line x1="7.5" y1="2.4" x2="12.5" y2="2.4" stroke="#676767" stroke-width="1" /><path d="M5.5 14.6 V9 H11.5 L14.5 12 V14.6" fill="none" stroke="#676767" stroke-width="1.1" /><path d="M11.5 9 V12 H14.5" fill="none" stroke="#676767" stroke-width="0.8" /><line x1="7.5" y1="14.1" x2="11.5" y2="14.1" stroke="#676767" stroke-width="1" /></svg>
<svg class="ic" style="left:9px;top:625px" width="16" height="16" viewBox="0 0 16 16"><line x1="8.4" y1="3" x2="8.4" y2="14" stroke="#8a8a8a" stroke-width="1" /><rect x="1.2" y="5.1" width="14.6" height="2.8" fill="#1a6fd0" stroke="none" stroke-width="1" rx="0.4"/><rect x="2.2" y="6.05" width="12.6" height="0.9" fill="#9cc6f2" stroke="none" stroke-width="1" /><rect x="1.2" y="9.1" width="14.6" height="2.8" fill="#1a6fd0" stroke="none" stroke-width="1" rx="0.4"/><rect x="2.2" y="10.049999999999999" width="12.6" height="0.9" fill="#9cc6f2" stroke="none" stroke-width="1" /><circle cx="8.4" cy="2.5" r="1.75" fill="#1f9a2c" stroke="none" stroke-width="1"/><circle cx="8.4" cy="2.5" r="0.65" fill="#fff" stroke="none" stroke-width="1"/><circle cx="8.4" cy="14.4" r="1.75" fill="#1f9a2c" stroke="none" stroke-width="1"/><circle cx="8.4" cy="14.4" r="0.65" fill="#fff" stroke="none" stroke-width="1"/></svg>
<svg class="ic" style="left:10px;top:649px" width="16" height="16" viewBox="0 0 16 16"><rect x="2.8" y="2.4" width="10.7" height="12" fill="none" stroke="#9a9a9a" stroke-width="1" /><rect x="0.2" y="5.1" width="15.7" height="2.8" fill="#1a6fd0" stroke="none" stroke-width="1" rx="0.4"/><rect x="1.2" y="6.05" width="13.7" height="0.9" fill="#9cc6f2" stroke="none" stroke-width="1" /><rect x="0.2" y="9.1" width="15.7" height="2.8" fill="#1a6fd0" stroke="none" stroke-width="1" rx="0.4"/><rect x="1.2" y="10.049999999999999" width="13.7" height="0.9" fill="#9cc6f2" stroke="none" stroke-width="1" /><circle cx="2.8" cy="2.4" r="1.75" fill="#1f9a2c" stroke="none" stroke-width="1"/><circle cx="2.8" cy="2.4" r="0.65" fill="#fff" stroke="none" stroke-width="1"/><circle cx="2.8" cy="14.4" r="1.75" fill="#1f9a2c" stroke="none" stroke-width="1"/><circle cx="2.8" cy="14.4" r="0.65" fill="#fff" stroke="none" stroke-width="1"/><circle cx="13.5" cy="2.4" r="1.75" fill="#1f9a2c" stroke="none" stroke-width="1"/><circle cx="13.5" cy="2.4" r="0.65" fill="#fff" stroke="none" stroke-width="1"/><circle cx="13.5" cy="14.4" r="1.75" fill="#1f9a2c" stroke="none" stroke-width="1"/><circle cx="13.5" cy="14.4" r="0.65" fill="#fff" stroke="none" stroke-width="1"/></svg>
<div class="abs" style="left:0;top:673px;width:1px;height:1px;background:#f00000;"></div><div class="abs" style="left:1px;top:673px;width:1px;height:1px;background:#00c800;"></div><div class="abs" style="left:2px;top:673px;width:1px;height:1px;background:#0000f0;"></div>
<div class="abs" style="left:46px;top:116px;width:12px;height:12px;box-sizing:border-box;background:#cfe3f6;border:1px solid #8dbbe8;"></div>
<svg class="ic" style="left:46px;top:116px" width="12" height="12" viewBox="0 0 12 12"><path d="M10 3 V10 H3 Z" fill="#222"/></svg>
<svg class="abs" style="left:0;top:0" width="877" height="674" viewBox="0 0 877 674" shape-rendering="crispEdges"><rect x="73" y="116" width="794" height="12" fill="#fff"/><rect x="73" y="116" width="96" height="12" fill="#e8e8e8"/><rect x="771" y="116" width="96" height="12" fill="#e8e8e8"/><rect x="169" y="116" width="602" height="1" fill="#e4e4e4"/><rect x="169" y="127" width="602" height="1" fill="#e4e4e4"/><rect x="85" y="121" width="1" height="2" fill="#5a5a5a"/><rect x="97" y="121" width="1" height="2" fill="#5a5a5a"/><rect x="109" y="121" width="1" height="2" fill="#5a5a5a"/><rect x="121" y="119" width="1" height="6" fill="#5a5a5a"/><rect x="133" y="121" width="1" height="2" fill="#5a5a5a"/><rect x="145" y="121" width="1" height="2" fill="#5a5a5a"/><rect x="157" y="121" width="1" height="2" fill="#5a5a5a"/><rect x="181" y="121" width="1" height="2" fill="#5a5a5a"/><rect x="193" y="121" width="1" height="2" fill="#5a5a5a"/><rect x="205" y="121" width="1" height="2" fill="#5a5a5a"/><rect x="217" y="119" width="1" height="6" fill="#5a5a5a"/><rect x="229" y="121" width="1" height="2" fill="#5a5a5a"/><rect x="241" y="121" width="1" height="2" fill="#5a5a5a"/><rect x="253" y="121" width="1" height="2" fill="#5a5a5a"/><rect x="277" y="121" width="1" height="2" fill="#5a5a5a"/><rect x="289" y="121" width="1" height="2" fill="#5a5a5a"/><rect x="301" y="121" width="1" height="2" fill="#5a5a5a"/><rect x="313" y="119" width="1" height="6" fill="#5a5a5a"/><rect x="325" y="121" width="1" height="2" fill="#5a5a5a"/><rect x="337" y="121" width="1" height="2" fill="#5a5a5a"/><rect x="349" y="121" width="1" height="2" fill="#5a5a5a"/><rect x="373" y="121" width="1" height="2" fill="#5a5a5a"/><rect x="385" y="121" width="1" height="2" fill="#5a5a5a"/><rect x="397" y="121" width="1" height="2" fill="#5a5a5a"/><rect x="409" y="119" width="1" height="6" fill="#5a5a5a"/><rect x="421" y="121" width="1" height="2" fill="#5a5a5a"/><rect x="433" y="121" width="1" height="2" fill="#5a5a5a"/><rect x="445" y="121" width="1" height="2" fill="#5a5a5a"/><rect x="469" y="121" width="1" height="2" fill="#5a5a5a"/><rect x="481" y="121" width="1" height="2" fill="#5a5a5a"/><rect x="493" y="121" width="1" height="2" fill="#5a5a5a"/><rect x="505" y="119" width="1" height="6" fill="#5a5a5a"/><rect x="517" y="121" width="1" height="2" fill="#5a5a5a"/><rect x="529" y="121" width="1" height="2" fill="#5a5a5a"/><rect x="541" y="121" width="1" height="2" fill="#5a5a5a"/><rect x="565" y="121" width="1" height="2" fill="#5a5a5a"/><rect x="577" y="121" width="1" height="2" fill="#5a5a5a"/><rect x="589" y="121" width="1" height="2" fill="#5a5a5a"/><rect x="601" y="119" width="1" height="6" fill="#5a5a5a"/><rect x="613" y="121" width="1" height="2" fill="#5a5a5a"/><rect x="625" y="121" width="1" height="2" fill="#5a5a5a"/><rect x="637" y="121" width="1" height="2" fill="#5a5a5a"/><rect x="661" y="121" width="1" height="2" fill="#5a5a5a"/><rect x="673" y="121" width="1" height="2" fill="#5a5a5a"/><rect x="685" y="121" width="1" height="2" fill="#5a5a5a"/><rect x="697" y="119" width="1" height="6" fill="#5a5a5a"/><rect x="709" y="121" width="1" height="2" fill="#5a5a5a"/><rect x="721" y="121" width="1" height="2" fill="#5a5a5a"/><rect x="733" y="121" width="1" height="2" fill="#5a5a5a"/><rect x="757" y="121" width="1" height="2" fill="#5a5a5a"/><rect x="769" y="121" width="1" height="2" fill="#5a5a5a"/><rect x="781" y="121" width="1" height="2" fill="#5a5a5a"/><rect x="793" y="119" width="1" height="6" fill="#5a5a5a"/><rect x="805" y="121" width="1" height="2" fill="#5a5a5a"/><rect x="817" y="121" width="1" height="2" fill="#5a5a5a"/><rect x="829" y="121" width="1" height="2" fill="#5a5a5a"/><rect x="853" y="121" width="1" height="2" fill="#5a5a5a"/><rect x="865" y="121" width="1" height="2" fill="#5a5a5a"/><rect x="46" y="142" width="12" height="409" fill="#fff"/><rect x="46" y="142" width="12" height="118" fill="#e8e8e8"/><rect x="46" y="287" width="12" height="23" fill="#e8e8e8"/><rect x="46" y="404" width="12" height="23" fill="#e8e8e8"/><rect x="46" y="454" width="12" height="97" fill="#e8e8e8"/><rect x="46" y="260" width="1" height="27" fill="#ededed"/><rect x="57" y="260" width="1" height="27" fill="#ededed"/><rect x="46" y="310" width="1" height="94" fill="#ededed"/><rect x="57" y="310" width="1" height="94" fill="#ededed"/><rect x="46" y="427" width="1" height="27" fill="#ededed"/><rect x="57" y="427" width="1" height="27" fill="#ededed"/><rect x="51" y="153" width="2" height="1" fill="#5a5a5a"/><rect x="51" y="165" width="2" height="1" fill="#5a5a5a"/><rect x="51" y="177" width="2" height="1" fill="#5a5a5a"/><rect x="49" y="189" width="6" height="1" fill="#5a5a5a"/><rect x="51" y="201" width="2" height="1" fill="#5a5a5a"/><rect x="51" y="213" width="2" height="1" fill="#5a5a5a"/><rect x="51" y="225" width="2" height="1" fill="#5a5a5a"/><rect x="51" y="270" width="2" height="1" fill="#5a5a5a"/><rect x="51" y="282" width="2" height="1" fill="#5a5a5a"/><rect x="51" y="320" width="2" height="1" fill="#5a5a5a"/><rect x="51" y="332" width="2" height="1" fill="#5a5a5a"/><rect x="51" y="344" width="2" height="1" fill="#5a5a5a"/><rect x="49" y="356" width="6" height="1" fill="#5a5a5a"/><rect x="51" y="368" width="2" height="1" fill="#5a5a5a"/><rect x="51" y="380" width="2" height="1" fill="#5a5a5a"/><rect x="51" y="392" width="2" height="1" fill="#5a5a5a"/><rect x="51" y="437" width="2" height="1" fill="#5a5a5a"/><rect x="51" y="449" width="2" height="1" fill="#5a5a5a"/><rect x="51" y="466" width="2" height="1" fill="#5a5a5a"/><rect x="51" y="478" width="2" height="1" fill="#5a5a5a"/><rect x="51" y="490" width="2" height="1" fill="#5a5a5a"/><rect x="49" y="502" width="6" height="1" fill="#5a5a5a"/><rect x="51" y="514" width="2" height="1" fill="#5a5a5a"/><rect x="51" y="526" width="2" height="1" fill="#5a5a5a"/><rect x="51" y="538" width="2" height="1" fill="#5a5a5a"/><rect x="48" y="246" width="8" height="1" fill="#6a6a6a"/><rect x="48" y="248" width="8" height="1" fill="#6a6a6a"/><rect x="48" y="250" width="8" height="1" fill="#6a6a6a"/><rect x="48" y="296" width="8" height="1" fill="#6a6a6a"/><rect x="48" y="298" width="8" height="1" fill="#6a6a6a"/><rect x="48" y="300" width="8" height="1" fill="#6a6a6a"/><rect x="48" y="413" width="8" height="1" fill="#6a6a6a"/><rect x="48" y="415" width="8" height="1" fill="#6a6a6a"/><rect x="48" y="417" width="8" height="1" fill="#6a6a6a"/><rect x="71" y="142" width="796" height="96" fill="#fff"/><rect x="84" y="142" width="1" height="96" fill="#efefef"/><rect x="96" y="142" width="1" height="96" fill="#efefef"/><rect x="108" y="142" width="1" height="96" fill="#efefef"/><rect x="120" y="142" width="1" height="96" fill="#e2e2e2"/><rect x="132" y="142" width="1" height="96" fill="#efefef"/><rect x="144" y="142" width="1" height="96" fill="#efefef"/><rect x="156" y="142" width="1" height="96" fill="#efefef"/><rect x="168" y="142" width="1" height="96" fill="#e2e2e2"/><rect x="180" y="142" width="1" height="96" fill="#efefef"/><rect x="192" y="142" width="1" height="96" fill="#efefef"/><rect x="204" y="142" width="1" height="96" fill="#efefef"/><rect x="216" y="142" width="1" height="96" fill="#e2e2e2"/><rect x="228" y="142" width="1" height="96" fill="#efefef"/><rect x="240" y="142" width="1" height="96" fill="#efefef"/><rect x="252" y="142" width="1" height="96" fill="#efefef"/><rect x="264" y="142" width="1" height="96" fill="#e2e2e2"/><rect x="276" y="142" width="1" height="96" fill="#efefef"/><rect x="288" y="142" width="1" height="96" fill="#efefef"/><rect x="300" y="142" width="1" height="96" fill="#efefef"/><rect x="312" y="142" width="1" height="96" fill="#e2e2e2"/><rect x="324" y="142" width="1" height="96" fill="#efefef"/><rect x="336" y="142" width="1" height="96" fill="#efefef"/><rect x="348" y="142" width="1" height="96" fill="#efefef"/><rect x="360" y="142" width="1" height="96" fill="#e2e2e2"/><rect x="372" y="142" width="1" height="96" fill="#efefef"/><rect x="384" y="142" width="1" height="96" fill="#efefef"/><rect x="396" y="142" width="1" height="96" fill="#efefef"/><rect x="408" y="142" width="1" height="96" fill="#e2e2e2"/><rect x="420" y="142" width="1" height="96" fill="#efefef"/><rect x="432" y="142" width="1" height="96" fill="#efefef"/><rect x="444" y="142" width="1" height="96" fill="#efefef"/><rect x="456" y="142" width="1" height="96" fill="#e2e2e2"/><rect x="468" y="142" width="1" height="96" fill="#efefef"/><rect x="480" y="142" width="1" height="96" fill="#efefef"/><rect x="492" y="142" width="1" height="96" fill="#efefef"/><rect x="504" y="142" width="1" height="96" fill="#e2e2e2"/><rect x="516" y="142" width="1" height="96" fill="#efefef"/><rect x="528" y="142" width="1" height="96" fill="#efefef"/><rect x="540" y="142" width="1" height="96" fill="#efefef"/><rect x="552" y="142" width="1" height="96" fill="#e2e2e2"/><rect x="564" y="142" width="1" height="96" fill="#efefef"/><rect x="576" y="142" width="1" height="96" fill="#efefef"/><rect x="588" y="142" width="1" height="96" fill="#efefef"/><rect x="600" y="142" width="1" height="96" fill="#e2e2e2"/><rect x="612" y="142" width="1" height="96" fill="#efefef"/><rect x="624" y="142" width="1" height="96" fill="#efefef"/><rect x="636" y="142" width="1" height="96" fill="#efefef"/><rect x="648" y="142" width="1" height="96" fill="#e2e2e2"/><rect x="660" y="142" width="1" height="96" fill="#efefef"/><rect x="672" y="142" width="1" height="96" fill="#efefef"/><rect x="684" y="142" width="1" height="96" fill="#efefef"/><rect x="696" y="142" width="1" height="96" fill="#e2e2e2"/><rect x="708" y="142" width="1" height="96" fill="#efefef"/><rect x="720" y="142" width="1" height="96" fill="#efefef"/><rect x="732" y="142" width="1" height="96" fill="#efefef"/><rect x="744" y="142" width="1" height="96" fill="#e2e2e2"/><rect x="756" y="142" width="1" height="96" fill="#efefef"/><rect x="768" y="142" width="1" height="96" fill="#efefef"/><rect x="780" y="142" width="1" height="96" fill="#efefef"/><rect x="792" y="142" width="1" height="96" fill="#e2e2e2"/><rect x="804" y="142" width="1" height="96" fill="#efefef"/><rect x="816" y="142" width="1" height="96" fill="#efefef"/><rect x="828" y="142" width="1" height="96" fill="#efefef"/><rect x="840" y="142" width="1" height="96" fill="#e2e2e2"/><rect x="852" y="142" width="1" height="96" fill="#efefef"/><rect x="864" y="142" width="1" height="96" fill="#efefef"/><rect x="71" y="154" width="796" height="1" fill="#efefef"/><rect x="71" y="166" width="796" height="1" fill="#efefef"/><rect x="71" y="178" width="796" height="1" fill="#efefef"/><rect x="71" y="189" width="796" height="1" fill="#e2e2e2"/><rect x="71" y="202" width="796" height="1" fill="#efefef"/><rect x="71" y="214" width="796" height="1" fill="#efefef"/><rect x="71" y="226" width="796" height="1" fill="#efefef"/><rect x="71" y="238" width="796" height="21" fill="#f3f3f3"/><rect x="71" y="238" width="796" height="1" fill="#c9c9c9"/><rect x="71" y="258" width="796" height="1" fill="#c9c9c9"/><rect x="71" y="259" width="796" height="29" fill="#fff"/><rect x="84" y="259" width="1" height="29" fill="#efefef"/><rect x="96" y="259" width="1" height="29" fill="#efefef"/><rect x="108" y="259" width="1" height="29" fill="#efefef"/><rect x="120" y="259" width="1" height="29" fill="#e2e2e2"/><rect x="132" y="259" width="1" height="29" fill="#efefef"/><rect x="144" y="259" width="1" height="29" fill="#efefef"/><rect x="156" y="259" width="1" height="29" fill="#efefef"/><rect x="168" y="259" width="1" height="29" fill="#e2e2e2"/><rect x="180" y="259" width="1" height="29" fill="#efefef"/><rect x="192" y="259" width="1" height="29" fill="#efefef"/><rect x="204" y="259" width="1" height="29" fill="#efefef"/><rect x="216" y="259" width="1" height="29" fill="#e2e2e2"/><rect x="228" y="259" width="1" height="29" fill="#efefef"/><rect x="240" y="259" width="1" height="29" fill="#efefef"/><rect x="252" y="259" width="1" height="29" fill="#efefef"/><rect x="264" y="259" width="1" height="29" fill="#e2e2e2"/><rect x="276" y="259" width="1" height="29" fill="#efefef"/><rect x="288" y="259" width="1" height="29" fill="#efefef"/><rect x="300" y="259" width="1" height="29" fill="#efefef"/><rect x="312" y="259" width="1" height="29" fill="#e2e2e2"/><rect x="324" y="259" width="1" height="29" fill="#efefef"/><rect x="336" y="259" width="1" height="29" fill="#efefef"/><rect x="348" y="259" width="1" height="29" fill="#efefef"/><rect x="360" y="259" width="1" height="29" fill="#e2e2e2"/><rect x="372" y="259" width="1" height="29" fill="#efefef"/><rect x="384" y="259" width="1" height="29" fill="#efefef"/><rect x="396" y="259" width="1" height="29" fill="#efefef"/><rect x="408" y="259" width="1" height="29" fill="#e2e2e2"/><rect x="420" y="259" width="1" height="29" fill="#efefef"/><rect x="432" y="259" width="1" height="29" fill="#efefef"/><rect x="444" y="259" width="1" height="29" fill="#efefef"/><rect x="456" y="259" width="1" height="29" fill="#e2e2e2"/><rect x="468" y="259" width="1" height="29" fill="#efefef"/><rect x="480" y="259" width="1" height="29" fill="#efefef"/><rect x="492" y="259" width="1" height="29" fill="#efefef"/><rect x="504" y="259" width="1" height="29" fill="#e2e2e2"/><rect x="516" y="259" width="1" height="29" fill="#efefef"/><rect x="528" y="259" width="1" height="29" fill="#efefef"/><rect x="540" y="259" width="1" height="29" fill="#efefef"/><rect x="552" y="259" width="1" height="29" fill="#e2e2e2"/><rect x="564" y="259" width="1" height="29" fill="#efefef"/><rect x="576" y="259" width="1" height="29" fill="#efefef"/><rect x="588" y="259" width="1" height="29" fill="#efefef"/><rect x="600" y="259" width="1" height="29" fill="#e2e2e2"/><rect x="612" y="259" width="1" height="29" fill="#efefef"/><rect x="624" y="259" width="1" height="29" fill="#efefef"/><rect x="636" y="259" width="1" height="29" fill="#efefef"/><rect x="648" y="259" width="1" height="29" fill="#e2e2e2"/><rect x="660" y="259" width="1" height="29" fill="#efefef"/><rect x="672" y="259" width="1" height="29" fill="#efefef"/><rect x="684" y="259" width="1" height="29" fill="#efefef"/><rect x="696" y="259" width="1" height="29" fill="#e2e2e2"/><rect x="708" y="259" width="1" height="29" fill="#efefef"/><rect x="720" y="259" width="1" height="29" fill="#efefef"/><rect x="732" y="259" width="1" height="29" fill="#efefef"/><rect x="744" y="259" width="1" height="29" fill="#e2e2e2"/><rect x="756" y="259" width="1" height="29" fill="#efefef"/><rect x="768" y="259" width="1" height="29" fill="#efefef"/><rect x="780" y="259" width="1" height="29" fill="#efefef"/><rect x="792" y="259" width="1" height="29" fill="#e2e2e2"/><rect x="804" y="259" width="1" height="29" fill="#efefef"/><rect x="816" y="259" width="1" height="29" fill="#efefef"/><rect x="828" y="259" width="1" height="29" fill="#efefef"/><rect x="840" y="259" width="1" height="29" fill="#e2e2e2"/><rect x="852" y="259" width="1" height="29" fill="#efefef"/><rect x="864" y="259" width="1" height="29" fill="#efefef"/><rect x="71" y="271" width="796" height="1" fill="#efefef"/><rect x="71" y="283" width="796" height="1" fill="#efefef"/><rect x="71" y="288" width="796" height="21" fill="#f3f3f3"/><rect x="71" y="288" width="796" height="1" fill="#c9c9c9"/><rect x="71" y="308" width="796" height="1" fill="#c9c9c9"/><rect x="71" y="309" width="796" height="96" fill="#fff"/><rect x="84" y="309" width="1" height="96" fill="#efefef"/><rect x="96" y="309" width="1" height="96" fill="#efefef"/><rect x="108" y="309" width="1" height="96" fill="#efefef"/><rect x="120" y="309" width="1" height="96" fill="#e2e2e2"/><rect x="132" y="309" width="1" height="96" fill="#efefef"/><rect x="144" y="309" width="1" height="96" fill="#efefef"/><rect x="156" y="309" width="1" height="96" fill="#efefef"/><rect x="168" y="309" width="1" height="96" fill="#e2e2e2"/><rect x="180" y="309" width="1" height="96" fill="#efefef"/><rect x="192" y="309" width="1" height="96" fill="#efefef"/><rect x="204" y="309" width="1" height="96" fill="#efefef"/><rect x="216" y="309" width="1" height="96" fill="#e2e2e2"/><rect x="228" y="309" width="1" height="96" fill="#efefef"/><rect x="240" y="309" width="1" height="96" fill="#efefef"/><rect x="252" y="309" width="1" height="96" fill="#efefef"/><rect x="264" y="309" width="1" height="96" fill="#e2e2e2"/><rect x="276" y="309" width="1" height="96" fill="#efefef"/><rect x="288" y="309" width="1" height="96" fill="#efefef"/><rect x="300" y="309" width="1" height="96" fill="#efefef"/><rect x="312" y="309" width="1" height="96" fill="#e2e2e2"/><rect x="324" y="309" width="1" height="96" fill="#efefef"/><rect x="336" y="309" width="1" height="96" fill="#efefef"/><rect x="348" y="309" width="1" height="96" fill="#efefef"/><rect x="360" y="309" width="1" height="96" fill="#e2e2e2"/><rect x="372" y="309" width="1" height="96" fill="#efefef"/><rect x="384" y="309" width="1" height="96" fill="#efefef"/><rect x="396" y="309" width="1" height="96" fill="#efefef"/><rect x="408" y="309" width="1" height="96" fill="#e2e2e2"/><rect x="420" y="309" width="1" height="96" fill="#efefef"/><rect x="432" y="309" width="1" height="96" fill="#efefef"/><rect x="444" y="309" width="1" height="96" fill="#efefef"/><rect x="456" y="309" width="1" height="96" fill="#e2e2e2"/><rect x="468" y="309" width="1" height="96" fill="#efefef"/><rect x="480" y="309" width="1" height="96" fill="#efefef"/><rect x="492" y="309" width="1" height="96" fill="#efefef"/><rect x="504" y="309" width="1" height="96" fill="#e2e2e2"/><rect x="516" y="309" width="1" height="96" fill="#efefef"/><rect x="528" y="309" width="1" height="96" fill="#efefef"/><rect x="540" y="309" width="1" height="96" fill="#efefef"/><rect x="552" y="309" width="1" height="96" fill="#e2e2e2"/><rect x="564" y="309" width="1" height="96" fill="#efefef"/><rect x="576" y="309" width="1" height="96" fill="#efefef"/><rect x="588" y="309" width="1" height="96" fill="#efefef"/><rect x="600" y="309" width="1" height="96" fill="#e2e2e2"/><rect x="612" y="309" width="1" height="96" fill="#efefef"/><rect x="624" y="309" width="1" height="96" fill="#efefef"/><rect x="636" y="309" width="1" height="96" fill="#efefef"/><rect x="648" y="309" width="1" height="96" fill="#e2e2e2"/><rect x="660" y="309" width="1" height="96" fill="#efefef"/><rect x="672" y="309" width="1" height="96" fill="#efefef"/><rect x="684" y="309" width="1" height="96" fill="#efefef"/><rect x="696" y="309" width="1" height="96" fill="#e2e2e2"/><rect x="708" y="309" width="1" height="96" fill="#efefef"/><rect x="720" y="309" width="1" height="96" fill="#efefef"/><rect x="732" y="309" width="1" height="96" fill="#efefef"/><rect x="744" y="309" width="1" height="96" fill="#e2e2e2"/><rect x="756" y="309" width="1" height="96" fill="#efefef"/><rect x="768" y="309" width="1" height="96" fill="#efefef"/><rect x="780" y="309" width="1" height="96" fill="#efefef"/><rect x="792" y="309" width="1" height="96" fill="#e2e2e2"/><rect x="804" y="309" width="1" height="96" fill="#efefef"/><rect x="816" y="309" width="1" height="96" fill="#efefef"/><rect x="828" y="309" width="1" height="96" fill="#efefef"/><rect x="840" y="309" width="1" height="96" fill="#e2e2e2"/><rect x="852" y="309" width="1" height="96" fill="#efefef"/><rect x="864" y="309" width="1" height="96" fill="#efefef"/><rect x="71" y="321" width="796" height="1" fill="#efefef"/><rect x="71" y="333" width="796" height="1" fill="#efefef"/><rect x="71" y="345" width="796" height="1" fill="#efefef"/><rect x="71" y="356" width="796" height="1" fill="#e2e2e2"/><rect x="71" y="369" width="796" height="1" fill="#efefef"/><rect x="71" y="381" width="796" height="1" fill="#efefef"/><rect x="71" y="393" width="796" height="1" fill="#efefef"/><rect x="71" y="405" width="796" height="21" fill="#f3f3f3"/><rect x="71" y="405" width="796" height="1" fill="#c9c9c9"/><rect x="71" y="425" width="796" height="1" fill="#c9c9c9"/><rect x="71" y="426" width="796" height="125" fill="#fff"/><rect x="84" y="426" width="1" height="125" fill="#efefef"/><rect x="96" y="426" width="1" height="125" fill="#efefef"/><rect x="108" y="426" width="1" height="125" fill="#efefef"/><rect x="120" y="426" width="1" height="125" fill="#e2e2e2"/><rect x="132" y="426" width="1" height="125" fill="#efefef"/><rect x="144" y="426" width="1" height="125" fill="#efefef"/><rect x="156" y="426" width="1" height="125" fill="#efefef"/><rect x="168" y="426" width="1" height="125" fill="#e2e2e2"/><rect x="180" y="426" width="1" height="125" fill="#efefef"/><rect x="192" y="426" width="1" height="125" fill="#efefef"/><rect x="204" y="426" width="1" height="125" fill="#efefef"/><rect x="216" y="426" width="1" height="125" fill="#e2e2e2"/><rect x="228" y="426" width="1" height="125" fill="#efefef"/><rect x="240" y="426" width="1" height="125" fill="#efefef"/><rect x="252" y="426" width="1" height="125" fill="#efefef"/><rect x="264" y="426" width="1" height="125" fill="#e2e2e2"/><rect x="276" y="426" width="1" height="125" fill="#efefef"/><rect x="288" y="426" width="1" height="125" fill="#efefef"/><rect x="300" y="426" width="1" height="125" fill="#efefef"/><rect x="312" y="426" width="1" height="125" fill="#e2e2e2"/><rect x="324" y="426" width="1" height="125" fill="#efefef"/><rect x="336" y="426" width="1" height="125" fill="#efefef"/><rect x="348" y="426" width="1" height="125" fill="#efefef"/><rect x="360" y="426" width="1" height="125" fill="#e2e2e2"/><rect x="372" y="426" width="1" height="125" fill="#efefef"/><rect x="384" y="426" width="1" height="125" fill="#efefef"/><rect x="396" y="426" width="1" height="125" fill="#efefef"/><rect x="408" y="426" width="1" height="125" fill="#e2e2e2"/><rect x="420" y="426" width="1" height="125" fill="#efefef"/><rect x="432" y="426" width="1" height="125" fill="#efefef"/><rect x="444" y="426" width="1" height="125" fill="#efefef"/><rect x="456" y="426" width="1" height="125" fill="#e2e2e2"/><rect x="468" y="426" width="1" height="125" fill="#efefef"/><rect x="480" y="426" width="1" height="125" fill="#efefef"/><rect x="492" y="426" width="1" height="125" fill="#efefef"/><rect x="504" y="426" width="1" height="125" fill="#e2e2e2"/><rect x="516" y="426" width="1" height="125" fill="#efefef"/><rect x="528" y="426" width="1" height="125" fill="#efefef"/><rect x="540" y="426" width="1" height="125" fill="#efefef"/><rect x="552" y="426" width="1" height="125" fill="#e2e2e2"/><rect x="564" y="426" width="1" height="125" fill="#efefef"/><rect x="576" y="426" width="1" height="125" fill="#efefef"/><rect x="588" y="426" width="1" height="125" fill="#efefef"/><rect x="600" y="426" width="1" height="125" fill="#e2e2e2"/><rect x="612" y="426" width="1" height="125" fill="#efefef"/><rect x="624" y="426" width="1" height="125" fill="#efefef"/><rect x="636" y="426" width="1" height="125" fill="#efefef"/><rect x="648" y="426" width="1" height="125" fill="#e2e2e2"/><rect x="660" y="426" width="1" height="125" fill="#efefef"/><rect x="672" y="426" width="1" height="125" fill="#efefef"/><rect x="684" y="426" width="1" height="125" fill="#efefef"/><rect x="696" y="426" width="1" height="125" fill="#e2e2e2"/><rect x="708" y="426" width="1" height="125" fill="#efefef"/><rect x="720" y="426" width="1" height="125" fill="#efefef"/><rect x="732" y="426" width="1" height="125" fill="#efefef"/><rect x="744" y="426" width="1" height="125" fill="#e2e2e2"/><rect x="756" y="426" width="1" height="125" fill="#efefef"/><rect x="768" y="426" width="1" height="125" fill="#efefef"/><rect x="780" y="426" width="1" height="125" fill="#efefef"/><rect x="792" y="426" width="1" height="125" fill="#e2e2e2"/><rect x="804" y="426" width="1" height="125" fill="#efefef"/><rect x="816" y="426" width="1" height="125" fill="#efefef"/><rect x="828" y="426" width="1" height="125" fill="#efefef"/><rect x="840" y="426" width="1" height="125" fill="#e2e2e2"/><rect x="852" y="426" width="1" height="125" fill="#efefef"/><rect x="864" y="426" width="1" height="125" fill="#efefef"/><rect x="71" y="438" width="796" height="1" fill="#efefef"/><rect x="71" y="450" width="796" height="1" fill="#efefef"/><rect x="71" y="466" width="796" height="1" fill="#efefef"/><rect x="71" y="478" width="796" height="1" fill="#efefef"/><rect x="71" y="490" width="796" height="1" fill="#efefef"/><rect x="71" y="501" width="796" height="1" fill="#e2e2e2"/><rect x="71" y="514" width="796" height="1" fill="#efefef"/><rect x="71" y="526" width="796" height="1" fill="#efefef"/><rect x="71" y="538" width="796" height="1" fill="#efefef"/><rect x="71" y="549" width="796" height="1" fill="#efefef"/><line x1="168.5" y1="142" x2="168.5" y2="238" stroke="#8c8c8c" stroke-width="1" stroke-dasharray="3 1"/><line x1="770.5" y1="142" x2="770.5" y2="238" stroke="#8c8c8c" stroke-width="1" stroke-dasharray="3 1"/><line x1="168.5" y1="259" x2="168.5" y2="288" stroke="#8c8c8c" stroke-width="1" stroke-dasharray="3 1"/><line x1="770.5" y1="259" x2="770.5" y2="288" stroke="#8c8c8c" stroke-width="1" stroke-dasharray="3 1"/><line x1="168.5" y1="309" x2="168.5" y2="405" stroke="#8c8c8c" stroke-width="1" stroke-dasharray="3 1"/><line x1="770.5" y1="309" x2="770.5" y2="405" stroke="#8c8c8c" stroke-width="1" stroke-dasharray="3 1"/><line x1="168.5" y1="426" x2="168.5" y2="551" stroke="#8c8c8c" stroke-width="1" stroke-dasharray="3 1"/><line x1="770.5" y1="426" x2="770.5" y2="551" stroke="#8c8c8c" stroke-width="1" stroke-dasharray="3 1"/><line x1="72" y1="455.5" x2="866" y2="455.5" stroke="#8c8c8c" stroke-width="1" stroke-dasharray="3 1"/><rect x="71" y="141" width="796" height="1" fill="#b9b9b9"/><rect x="71" y="551" width="796" height="1" fill="#b9b9b9"/><rect x="71" y="141" width="1" height="411" fill="#b9b9b9"/><rect x="866" y="141" width="1" height="411" fill="#b9b9b9"/></svg>
<div class="t" style="left:69.3px;top:116px;width:10px;height:12px;line-height:12px;text-align:center;font-size:9.5px;color:#777;">1</div>
<div class="t" style="left:260.5px;top:116px;width:10px;height:12px;line-height:12px;text-align:center;font-size:9.5px;color:#777;">1</div>
<div class="t" style="left:356.5px;top:116px;width:10px;height:12px;line-height:12px;text-align:center;font-size:9.5px;color:#777;">2</div>
<div class="t" style="left:452.5px;top:116px;width:10px;height:12px;line-height:12px;text-align:center;font-size:9.5px;color:#777;">3</div>
<div class="t" style="left:548.5px;top:116px;width:10px;height:12px;line-height:12px;text-align:center;font-size:9.5px;color:#777;">4</div>
<div class="t" style="left:644.5px;top:116px;width:10px;height:12px;line-height:12px;text-align:center;font-size:9.5px;color:#777;">5</div>
<div class="t" style="left:740.5px;top:116px;width:10px;height:12px;line-height:12px;text-align:center;font-size:9.5px;color:#777;">6</div>
<div class="t" style="left:836.5px;top:116px;width:10px;height:12px;line-height:12px;text-align:center;font-size:9.5px;color:#777;">7</div>
<div class="t" style="left:47px;top:231px;width:10px;height:10px;line-height:10px;text-align:center;font-size:8px;font-weight:bold;color:#9a8f86;">1</div>
<div class="t" style="left:47px;top:398px;width:10px;height:10px;line-height:10px;text-align:center;font-size:8px;font-weight:bold;color:#9a8f86;">1</div>
<div class="t" style="left:47px;top:544.5px;width:10px;height:10px;line-height:10px;text-align:center;font-size:8px;font-weight:bold;color:#9a8f86;">1</div>
<div class="abs" style="left:56px;top:126px;width:321px;height:359px;background:#faf7f6;"></div>
<div class="abs" style="left:58px;top:128px;width:317px;height:355px;box-sizing:border-box;background:#fff;border:1px solid #9a9a9a;"></div>
<div class="abs" style="left:58px;top:128px;width:317px;height:22px;background:#0072c6;"></div>
<div class="t " style="left:66px;top:132px;font-size:11.5px;color:#fff;font-weight:bold;letter-spacing:0.271px;">Report Tasks</div>
<div class="t " style="left:66px;top:158px;font-size:11px;color:#1067c6;letter-spacing:-0.056px;">Design in Report Wizard...</div>
<div class="t " style="left:66px;top:174px;font-size:11px;color:#1067c6;letter-spacing:-0.066px;">Edit and Reorder Bands...</div>
<div class="t " style="left:66px;top:190px;font-size:11px;color:#1067c6;letter-spacing:-0.092px;">Edit Bindings...</div>
<div class="t " style="left:63.3px;top:220px;font-size:11px;color:#2b2b2b;letter-spacing:-0.276px;">Data Source</div>
<div class="inp" style="top:217px;"><div class="btn"></div></div>
<div class="t " style="left:202.4px;top:220px;font-size:11px;color:#2b2b2b;letter-spacing:-0.083px;">Data</div>
<svg class="ic" style="left:352px;top:219px" width="16" height="16" viewBox="0 0 16 16"><path d="M4.9 5.7 L8 9.4 L11.1 5.7" fill="none" stroke="#666" stroke-width="1.8" /></svg>
<div class="t " style="left:63.3px;top:243px;font-size:11px;color:#2b2b2b;letter-spacing:-0.364px;">Data Member</div>
<div class="inp" style="top:240px;"><div class="btn"></div></div>
<div class="t " style="left:202.4px;top:243px;font-size:11px;color:#2b2b2b;letter-spacing:-0.030px;">ReportData</div>
<svg class="ic" style="left:352px;top:242px" width="16" height="16" viewBox="0 0 16 16"><path d="M4.9 5.7 L8 9.4 L11.1 5.7" fill="none" stroke="#666" stroke-width="1.8" /></svg>
<div class="t " style="left:63.3px;top:266px;font-size:11px;color:#2b2b2b;letter-spacing:-0.020px;">Data Adapter</div>
<div class="inp" style="top:263px;"><div class="btn"></div></div>
<div class="t " style="left:202.4px;top:266px;font-size:11px;color:#2b2b2b;letter-spacing:0.041px;">(none)</div>
<svg class="ic" style="left:352px;top:265px" width="16" height="16" viewBox="0 0 16 16"><path d="M4.9 5.7 L8 9.4 L11.1 5.7" fill="none" stroke="#666" stroke-width="1.8" /></svg>
<div class="t " style="left:63.3px;top:289px;font-size:11px;color:#2b2b2b;letter-spacing:-0.188px;">Filter String</div>
<div class="inp" style="top:286px;"><div class="btn"></div></div>
<div class="abs" style="left:355px;top:295px;width:2px;height:2px;background:#555;"></div>
<div class="abs" style="left:359px;top:295px;width:2px;height:2px;background:#555;"></div>
<div class="abs" style="left:363px;top:295px;width:2px;height:2px;background:#555;"></div>
<div class="t " style="left:63.3px;top:323px;font-size:11px;color:#2b2b2b;letter-spacing:-0.229px;">Detail Count at Design Time</div>
<div class="inp" style="top:320px;"><div class="btn"></div></div>
<div class="t " style="left:202.4px;top:323px;font-size:11px;color:#2b2b2b;letter-spacing:-0.125px;">0</div>
<svg class="ic" style="left:352.5px;top:322px" width="16" height="16" viewBox="0 0 16 16"><path d="M5.9 5.3 L8 3.1 L10.1 5.3 M5.9 11.3 L8 13.5 L10.1 11.3" fill="none" stroke="#666" stroke-width="1.5"/></svg>
<div class="t " style="left:63.3px;top:357px;font-size:11px;color:#2b2b2b;letter-spacing:-0.243px;">Measure Units</div>
<div class="inp" style="top:354px;"><div class="btn"></div></div>
<div class="t " style="left:202.4px;top:357px;font-size:11px;color:#2b2b2b;letter-spacing:-0.013px;">Hundredths of an Inch</div>
<svg class="ic" style="left:352px;top:356px" width="16" height="16" viewBox="0 0 16 16"><path d="M4.9 5.7 L8 9.4 L11.1 5.7" fill="none" stroke="#666" stroke-width="1.8" /></svg>
<div class="t " style="left:63.3px;top:391px;font-size:11px;color:#2b2b2b;letter-spacing:-0.251px;">Formatting Rules</div>
<div class="inp" style="top:388px;"><div class="btn"></div></div>
<div class="t " style="left:202.4px;top:391px;font-size:11px;color:#2b2b2b;letter-spacing:-0.149px;">(Collection)</div>
<div class="abs" style="left:355px;top:397px;width:2px;height:2px;background:#555;"></div>
<div class="abs" style="left:359px;top:397px;width:2px;height:2px;background:#555;"></div>
<div class="abs" style="left:363px;top:397px;width:2px;height:2px;background:#555;"></div>
<div class="t " style="left:63.3px;top:414px;font-size:11px;color:#2b2b2b;letter-spacing:-0.153px;">Formatting Rule Sheet</div>
<div class="inp" style="top:411px;"><div class="btn"></div></div>
<div class="t " style="left:202.4px;top:414px;font-size:11px;color:#2b2b2b;letter-spacing:-0.149px;">(Collection)</div>
<div class="abs" style="left:355px;top:420px;width:2px;height:2px;background:#555;"></div>
<div class="abs" style="left:359px;top:420px;width:2px;height:2px;background:#555;"></div>
<div class="abs" style="left:363px;top:420px;width:2px;height:2px;background:#555;"></div>
<div class="t " style="left:63.3px;top:437px;font-size:11px;color:#2b2b2b;letter-spacing:-0.127px;">Style Sheet</div>
<div class="inp" style="top:434px;"><div class="btn"></div></div>
<div class="t " style="left:202.4px;top:437px;font-size:11px;color:#2b2b2b;letter-spacing:-0.149px;">(Collection)</div>
<div class="abs" style="left:355px;top:443px;width:2px;height:2px;background:#555;"></div>
<div class="abs" style="left:359px;top:443px;width:2px;height:2px;background:#555;"></div>
<div class="abs" style="left:363px;top:443px;width:2px;height:2px;background:#555;"></div>
<div class="t " style="left:63.3px;top:460px;font-size:11px;color:#2b2b2b;letter-spacing:-0.047px;">Watermark</div>
<div class="inp" style="top:457px;"><div class="btn"></div></div>
<div class="t " style="left:202.4px;top:460px;font-size:11px;color:#2b2b2b;letter-spacing:0.041px;">(none)</div>
<div class="abs" style="left:355px;top:466px;width:2px;height:2px;background:#555;"></div>
<div class="abs" style="left:359px;top:466px;width:2px;height:2px;background:#555;"></div>
<div class="abs" style="left:363px;top:466px;width:2px;height:2px;background:#555;"></div>
</body></html>
